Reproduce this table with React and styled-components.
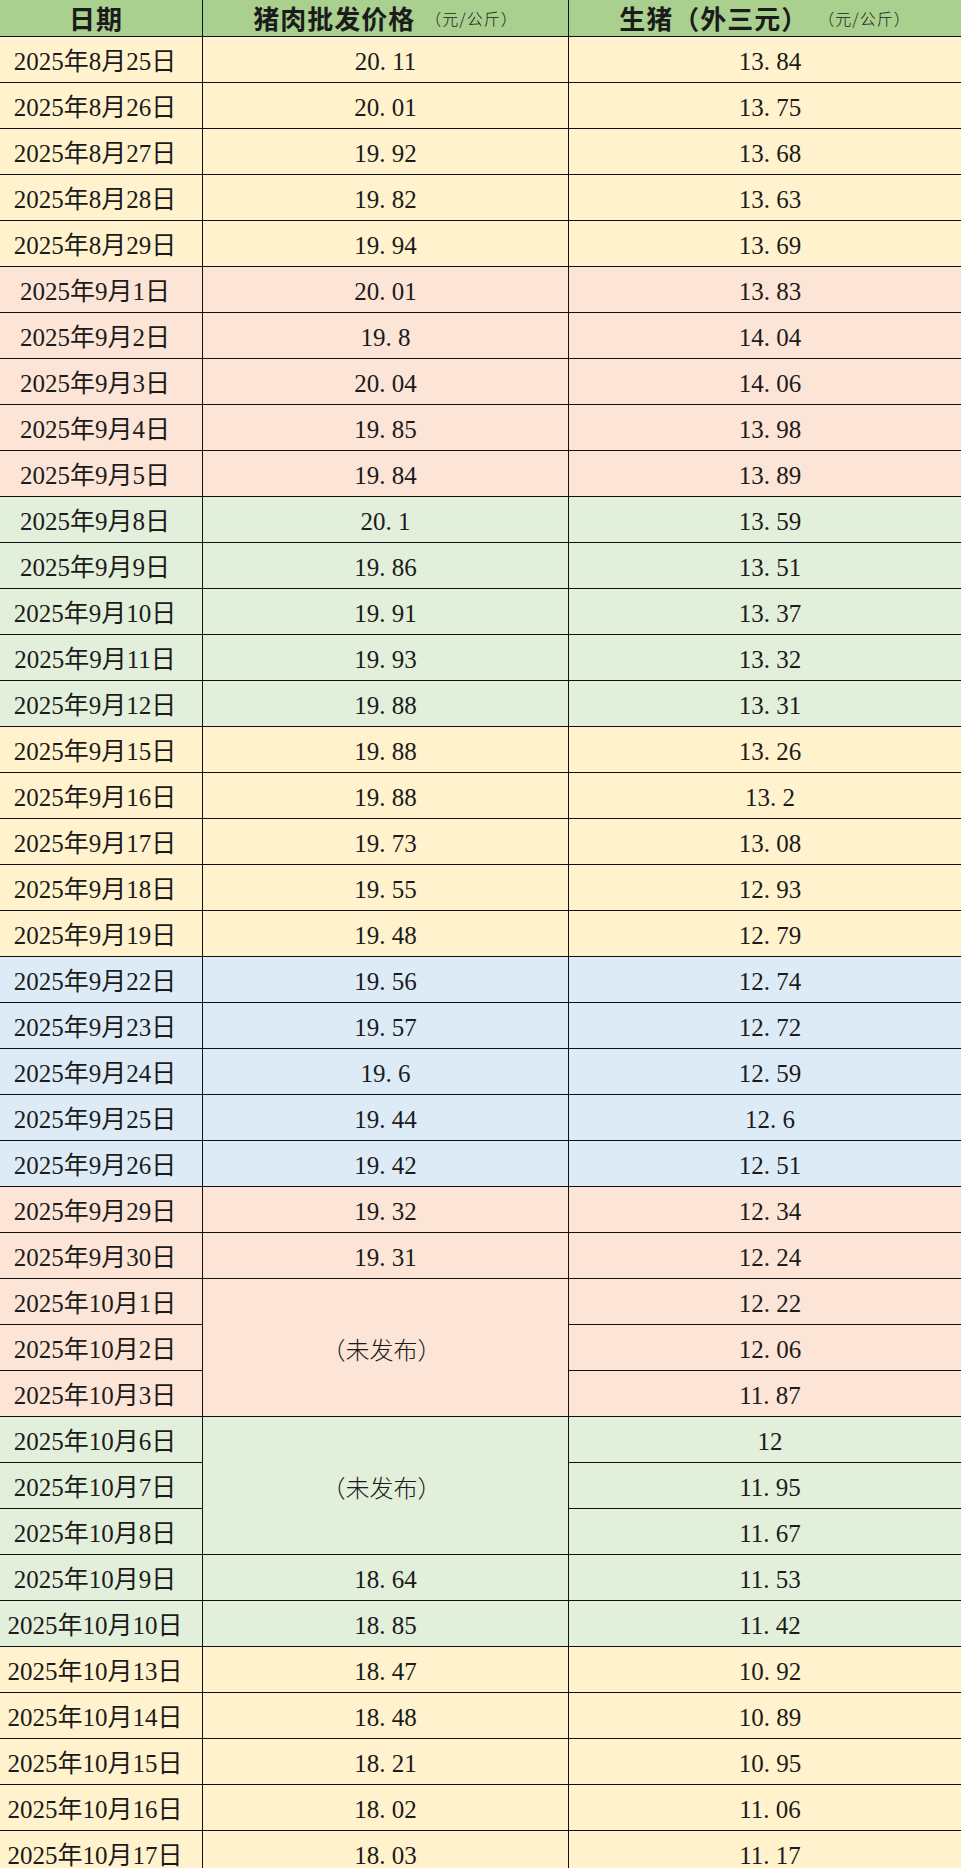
import React from "react";
import styled, { createGlobalStyle } from "styled-components";

const GlobalStyle = createGlobalStyle`
  html, body {
    margin: 0;
    padding: 0;
    background: #ffffff;
  }
  * {
    box-sizing: border-box;
  }
`;

const tints = {
  yellow: "#FFF2CC",
  pink: "#FCE4D6",
  green: "#E2EFDA",
  blue: "#DDEBF7",
};

// [date, wholesale price, live hog price, tint]
// wholesale: "merge" starts a 3-row merged cell, null = covered by merge
const rows = [
  ["2025年8月25日", "20.11", "13.84", "yellow"],
  ["2025年8月26日", "20.01", "13.75", "yellow"],
  ["2025年8月27日", "19.92", "13.68", "yellow"],
  ["2025年8月28日", "19.82", "13.63", "yellow"],
  ["2025年8月29日", "19.94", "13.69", "yellow"],
  ["2025年9月1日", "20.01", "13.83", "pink"],
  ["2025年9月2日", "19.8", "14.04", "pink"],
  ["2025年9月3日", "20.04", "14.06", "pink"],
  ["2025年9月4日", "19.85", "13.98", "pink"],
  ["2025年9月5日", "19.84", "13.89", "pink"],
  ["2025年9月8日", "20.1", "13.59", "green"],
  ["2025年9月9日", "19.86", "13.51", "green"],
  ["2025年9月10日", "19.91", "13.37", "green"],
  ["2025年9月11日", "19.93", "13.32", "green"],
  ["2025年9月12日", "19.88", "13.31", "green"],
  ["2025年9月15日", "19.88", "13.26", "yellow"],
  ["2025年9月16日", "19.88", "13.2", "yellow"],
  ["2025年9月17日", "19.73", "13.08", "yellow"],
  ["2025年9月18日", "19.55", "12.93", "yellow"],
  ["2025年9月19日", "19.48", "12.79", "yellow"],
  ["2025年9月22日", "19.56", "12.74", "blue"],
  ["2025年9月23日", "19.57", "12.72", "blue"],
  ["2025年9月24日", "19.6", "12.59", "blue"],
  ["2025年9月25日", "19.44", "12.6", "blue"],
  ["2025年9月26日", "19.42", "12.51", "blue"],
  ["2025年9月29日", "19.32", "12.34", "pink"],
  ["2025年9月30日", "19.31", "12.24", "pink"],
  ["2025年10月1日", "merge", "12.22", "pink"],
  ["2025年10月2日", null, "12.06", "pink"],
  ["2025年10月3日", null, "11.87", "pink"],
  ["2025年10月6日", "merge", "12", "green"],
  ["2025年10月7日", null, "11.95", "green"],
  ["2025年10月8日", null, "11.67", "green"],
  ["2025年10月9日", "18.64", "11.53", "green"],
  ["2025年10月10日", "18.85", "11.42", "green"],
  ["2025年10月13日", "18.47", "10.92", "yellow"],
  ["2025年10月14日", "18.48", "10.89", "yellow"],
  ["2025年10月15日", "18.21", "10.95", "yellow"],
  ["2025年10月16日", "18.02", "11.06", "yellow"],
  ["2025年10月17日", "18.03", "11.17", "yellow"],
];

const Sheet = styled.div`
  display: grid;
  grid-template-columns: 203px 366px 392px;
  grid-template-rows: 37px;
  grid-auto-rows: 46px;
  width: 961px;
  color: #1b1b1b;
  font-family: "Liberation Serif", "Noto Sans CJK SC", serif;
`;

const HeadCell = styled.div`
  grid-column: ${(p) => p.$col};
  grid-row: 1;
  display: flex;
  align-items: center;
  justify-content: center;
  gap: ${(p) => (p.$col === 1 ? "0" : "10px")};
  padding-right: ${(p) => (p.$col === 1 ? "10px" : "0")};
  background: #A9D08E;
  border-bottom: 1px solid #111;
  border-right: ${(p) => (p.$col < 3 ? "1px solid #111" : "none")};
`;

const HeadTitle = styled.span`
  font-family: "Noto Sans CJK SC", sans-serif;
  font-weight: 700;
  font-size: 26px;
  line-height: 30px;
  letter-spacing: 1px;
`;

const HeadUnit = styled.span`
  font-family: "Noto Sans CJK SC", sans-serif;
  font-weight: 300;
  font-size: 16px;
  line-height: 20px;
  letter-spacing: 1px;
`;

const Cell = styled.div`
  grid-column: ${(p) => p.$col};
  grid-row: ${(p) => (p.$span ? `span ${p.$span}` : "auto")};
  display: flex;
  align-items: center;
  justify-content: center;
  padding-top: 3px;
  padding-right: ${(p) => (p.$col === 1 ? "12px" : "0")};
  padding-left: ${(p) => (p.$col === 3 ? "10px" : "0")};
  background: ${(p) => tints[p.$tint]};
  border-bottom: 1px solid #111;
  border-right: ${(p) => (p.$col < 3 ? "1px solid #111" : "none")};
  font-size: 25px;
  line-height: 1;
  white-space: nowrap;
`;

const DateText = styled.span`
  font-family: "Liberation Serif", "Noto Sans CJK SC", serif;
  font-weight: 400;
`;

const Dot = styled.span`
  display: inline-block;
  width: 0.5em;
`;

const Pending = styled.span`
  font-family: "Noto Sans CJK SC", sans-serif;
  font-size: 24px;
  font-weight: 300;
  margin-left: -8px;
`;

const Num = ({ value }) => {
  const [whole, frac] = value.split(".");
  return (
    <span>
      {whole}
      {frac !== undefined && (
        <>
          <Dot>.</Dot>
          {frac}
        </>
      )}
    </span>
  );
};

export default function App() {
  return (
    <>
      <GlobalStyle />
      <Sheet>
        <HeadCell $col={1}>
          <HeadTitle>日期</HeadTitle>
        </HeadCell>
        <HeadCell $col={2}>
          <HeadTitle>猪肉批发价格</HeadTitle>
          <HeadUnit>（元/公斤）</HeadUnit>
        </HeadCell>
        <HeadCell $col={3}>
          <HeadTitle>生猪（外三元）</HeadTitle>
          <HeadUnit>（元/公斤）</HeadUnit>
        </HeadCell>

        {rows.map(([date, price, live, tint]) => (
          <React.Fragment key={date}>
            <Cell $col={1} $tint={tint}>
              <DateText>{date}</DateText>
            </Cell>
            {price === "merge" && (
              <Cell $col={2} $span={3} $tint={tint}>
                <Pending>（未发布）</Pending>
              </Cell>
            )}
            {price && price !== "merge" && (
              <Cell $col={2} $tint={tint}>
                <Num value={price} />
              </Cell>
            )}
            <Cell $col={3} $tint={tint}>
              <Num value={live} />
            </Cell>
          </React.Fragment>
        ))}
      </Sheet>
    </>
  );
}
